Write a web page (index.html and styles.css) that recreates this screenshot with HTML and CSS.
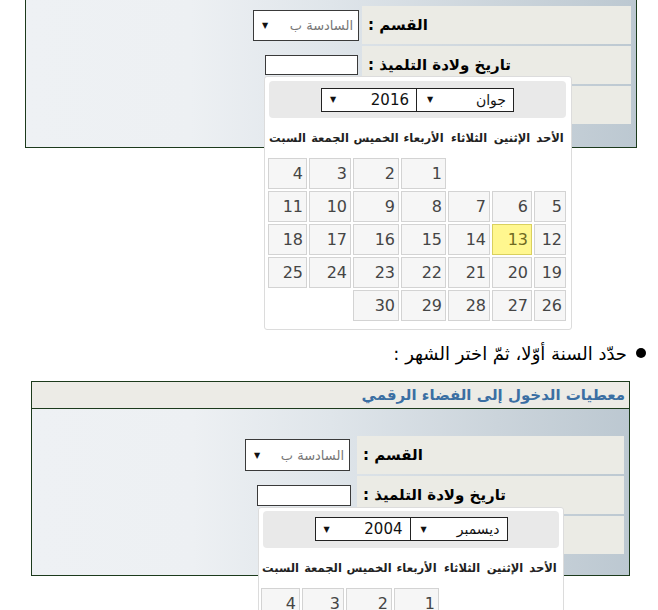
FILE: index.html
```html
<!DOCTYPE html>
<html lang="ar">
<head>
<meta charset="utf-8">
<title>تاريخ الولادة</title>
<link rel="stylesheet" href="styles.css">
</head>
<body>
<div class="panel p1">
  <div class="pbody">
    <div class="row">
      <div class="lbl">القسم :</div>
      <div class="ctl"><div class="sel"><span class="sel-t">السادسة ب</span><span class="arr">▼</span></div></div>
    </div>
    <div class="row">
      <div class="lbl">تاريخ ولادة التلميذ :</div>
      <div class="ctl">
        <div class="inpwrap">
          <div class="inp"></div>
          <div class="cal">
            <div class="cal-head">
              <div class="csel cm"><span class="ct">جوان</span><span class="arr">▼</span></div>
              <div class="csel cy"><span class="ct">2016</span><span class="arr">▼</span></div>
            </div>
            <div class="cal-grid names">
              <div>الأحد</div><div>الإثنين</div><div>الثلاثاء</div><div>الأربعاء</div><div>الخميس</div><div>الجمعة</div><div>السبت</div>
            </div>
            <div class="cal-grid days">
              <div class="e"></div><div class="e"></div><div class="e"></div><div class="d">1</div><div class="d">2</div><div class="d">3</div><div class="d">4</div>
              <div class="d">5</div><div class="d">6</div><div class="d">7</div><div class="d">8</div><div class="d">9</div><div class="d">10</div><div class="d">11</div>
              <div class="d">12</div><div class="d hl">13</div><div class="d">14</div><div class="d">15</div><div class="d">16</div><div class="d">17</div><div class="d">18</div>
              <div class="d">19</div><div class="d">20</div><div class="d">21</div><div class="d">22</div><div class="d">23</div><div class="d">24</div><div class="d">25</div>
              <div class="d">26</div><div class="d">27</div><div class="d">28</div><div class="d">29</div><div class="d">30</div><div class="e"></div><div class="e"></div>
            </div>
          </div>
        </div>
      </div>
    </div>
    <div class="row">
      <div class="lbl"></div>
      <div class="ctl"></div>
    </div>
  </div>
</div>

<p class="bullet"><span class="dot"></span><span>حدّد السنة أوّلا، ثمّ اختر الشهر :</span></p>

<div class="panel p2">
  <div class="phead">معطيات الدخول إلى الفضاء الرقمي</div>
  <div class="pbody">
    <div class="row">
      <div class="lbl">القسم :</div>
      <div class="ctl"><div class="sel"><span class="sel-t">السادسة ب</span><span class="arr">▼</span></div></div>
    </div>
    <div class="row">
      <div class="lbl">تاريخ ولادة التلميذ :</div>
      <div class="ctl">
        <div class="inpwrap">
          <div class="inp"></div>
          <div class="cal">
            <div class="cal-head">
              <div class="csel cm"><span class="ct">ديسمبر</span><span class="arr">▼</span></div>
              <div class="csel cy"><span class="ct">2004</span><span class="arr">▼</span></div>
            </div>
            <div class="cal-grid names">
              <div>الأحد</div><div>الإثنين</div><div>الثلاثاء</div><div>الأربعاء</div><div>الخميس</div><div>الجمعة</div><div>السبت</div>
            </div>
            <div class="cal-grid days">
              <div class="e"></div><div class="e"></div><div class="e"></div><div class="d">1</div><div class="d">2</div><div class="d">3</div><div class="d">4</div>
            </div>
          </div>
        </div>
      </div>
    </div>
    <div class="row">
      <div class="lbl"></div>
      <div class="ctl"></div>
    </div>
  </div>
</div>
</body>
</html>
```

FILE: styles.css
```css
html, body {
  margin: 0;
  padding: 0;
  overflow: hidden;
  background: #ffffff;
}
body {
  width: 658px;
  height: 610px;
  font-family: "DejaVu Sans", sans-serif;
  color: #000;
}

.panel {
  box-sizing: border-box;
  border: 1px solid #1c3a1c;
}
.p1 {
  margin-left: 25px;
  width: 612px;
  border-top: none;
}
.p2 {
  margin-left: 31px;
  width: 599px;
}

.phead {
  height: 26px;
  background: #ecebe6;
  border-bottom: 1px solid #1c3a1c;
  direction: rtl;
  padding-right: 4px;
  font-size: 15px;
  line-height: 26px;
  font-weight: bold;
  color: #3b6fa3;
}

.pbody {
  direction: rtl;
  display: flex;
  flex-direction: column;
  gap: 2px;
  background: linear-gradient(to right, #eef1f4 0%, #edf0f3 27%, #dfe5ea 50%, #cbd4db 78%, #bcc8d1 100%);
}
.p1 .pbody { padding: 6px 5px 23px 0; }
.p2 .pbody { padding: 27px 5px 21px 0; }

.row {
  display: flex;
  height: 38px;
}
.lbl {
  box-sizing: border-box;
  height: 38px;
  background: #ebebe5;
  text-align: left;
  padding-left: 6px;
  font-size: 15px;
  font-weight: bold;
  line-height: 38px;
  white-space: nowrap;
}
.p1 .lbl { width: 269px; }
.p2 .lbl { width: 267px; }

.ctl {
  flex: 1;
  display: flex;
  align-items: center;
}
.p1 .ctl { padding-right: 3px; }
.p2 .ctl { padding-right: 6px; }

.sel {
  box-sizing: border-box;
  display: flex;
  justify-content: space-between;
  align-items: center;
  background: #fff;
  border: 1px solid #3a3a3a;
  padding: 0 5px 0 8px;
}
.p1 .sel { width: 106px; height: 31px; }
.p2 .sel { width: 105px; height: 32px; margin-right: 1px; }
.sel-t {
  font-size: 13px;
  color: #777;
}
.arr {
  font-size: 8px;
  color: #111;
}

.inpwrap {
  position: relative;
}
.p1 .inpwrap { margin-right: 1px; }
.inp {
  box-sizing: border-box;
  background: #fff;
  border: 1px solid #3a3a3a;
}
.p1 .inp { width: 93px; height: 20px; }
.p2 .inp { width: 94px; height: 21px; }

.cal {
  position: absolute;
  z-index: 5;
  top: calc(100% + 1px);
  box-sizing: border-box;
  height: 254px;
  background: #fff;
  border: 1px solid #dcdcdc;
  border-radius: 3px;
  padding: 4px 5px 0 3px;
  direction: rtl;
}
.p1 .cal { left: -1px; width: 308px; }
.p2 .cal { left: 1px; width: 306px; padding: 3px 4px 0 3px; }

.cal-head {
  height: 37px;
  margin-left: 1px;
  background: #e9e9e9;
  border-radius: 4px;
  display: flex;
  justify-content: center;
  align-items: center;
}
.csel {
  box-sizing: border-box;
  height: 24px;
  display: flex;
  justify-content: space-between;
  align-items: center;
  background: #fff;
  border: 1px solid #222;
  padding: 0 7px 0 8px;
  color: #111;
}
.cm { width: 98px; padding-left: 10px; }
.cy { width: 96px; margin-right: -1px; }
.ct { font-size: 15px; }
.cm .ct { font-size: 14px; }

.cal-grid {
  display: grid;
  grid-template-columns: 32px 40px 42px 45px 46px 42px 39px;
  column-gap: 2px;
}
.names {
  height: 40px;
  align-items: center;
  justify-items: center;
  font-size: 11.5px;
  font-weight: bold;
  white-space: nowrap;
  color: #222;
}
.days {
  grid-auto-rows: 31px;
  row-gap: 2px;
}
.d {
  box-sizing: border-box;
  background: #f6f6f6;
  border: 1px solid #d3d3d3;
  color: #454545;
  font-size: 16px;
  line-height: 29px;
  text-align: right;
  padding-right: 3px;
}
.d.hl {
  background: #fff78f;
  border-color: #d9d05e;
  color: #6f6a22;
}

.bullet {
  direction: rtl;
  margin: 190px 0 13px 0;
  padding-right: 12px;
  height: 30px;
  display: flex;
  align-items: center;
  gap: 9px;
  font-size: 18px;
  color: #000;
}
.dot {
  width: 10px;
  height: 10px;
  border-radius: 50%;
  background: #000;
  flex: none;
}
```
